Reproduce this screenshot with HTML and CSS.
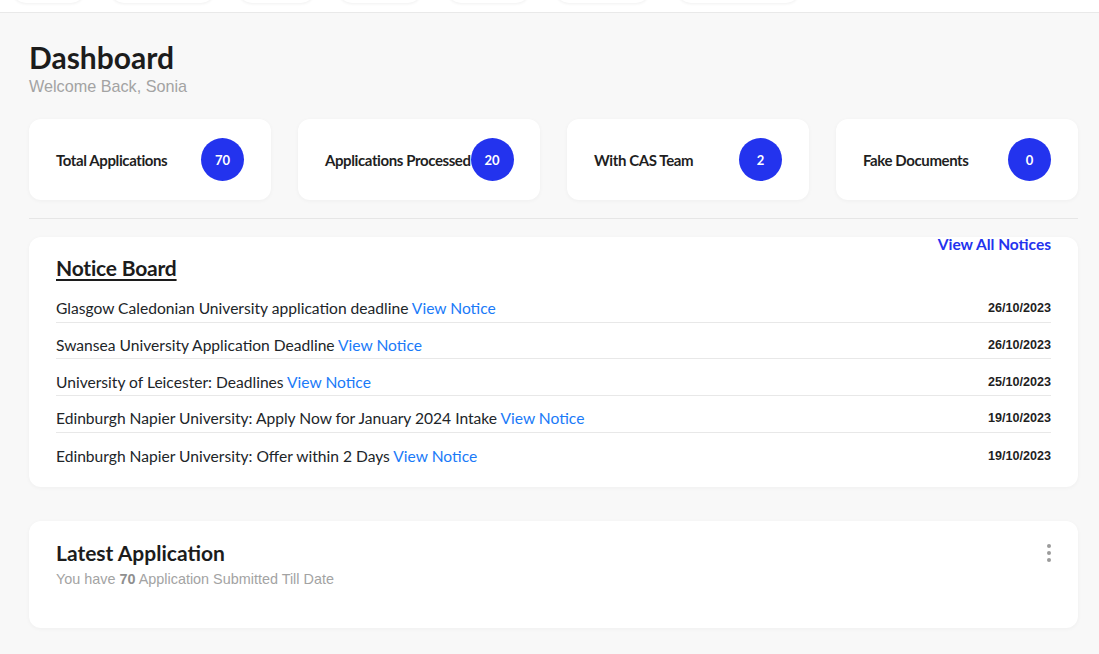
FILE: index.html
```html
<!DOCTYPE html>
<html lang="en">
<head>
<meta charset="utf-8">
<title>Dashboard</title>
<link rel="stylesheet" href="styles.css">
</head>
<body>
<header class="topbar">
  <span class="pill p1"></span>
  <span class="pill p2"></span>
  <span class="pill p3"></span>
  <span class="pill p4"></span>
  <span class="pill p5"></span>
  <span class="pill p6"></span>
  <span class="pill p7"></span>
</header>
<main class="main">
  <div class="page-head">
    <h1 class="page-title">Dashboard</h1>
    <p class="page-sub">Welcome Back, Sonia</p>
  </div>
  <section class="stats">
    <div class="stat"><span class="stat-label">Total Applications</span><span class="badge">70</span></div>
    <div class="stat"><span class="stat-label">Applications Processed</span><span class="badge">20</span></div>
    <div class="stat"><span class="stat-label">With CAS Team</span><span class="badge">2</span></div>
    <div class="stat"><span class="stat-label">Fake Documents</span><span class="badge">0</span></div>
  </section>
  <hr class="divider">
  <section class="card notices">
    <a class="view-all" href="#">View All Notices</a>
    <h2 class="card-title underline">Notice Board</h2>
    <ul class="notice-list">
      <li class="notice"><span class="notice-text">Glasgow Caledonian University application deadline <a href="#" class="notice-link">View Notice</a></span><span class="notice-date">26/10/2023</span></li>
      <li class="notice"><span class="notice-text">Swansea University Application Deadline <a href="#" class="notice-link">View Notice</a></span><span class="notice-date">26/10/2023</span></li>
      <li class="notice"><span class="notice-text">University of Leicester: Deadlines <a href="#" class="notice-link">View Notice</a></span><span class="notice-date">25/10/2023</span></li>
      <li class="notice"><span class="notice-text">Edinburgh Napier University: Apply Now for January 2024 Intake <a href="#" class="notice-link">View Notice</a></span><span class="notice-date">19/10/2023</span></li>
      <li class="notice"><span class="notice-text">Edinburgh Napier University: Offer within 2 Days <a href="#" class="notice-link">View Notice</a></span><span class="notice-date">19/10/2023</span></li>
    </ul>
  </section>
  <section class="card latest">
    <div class="latest-head">
      <div>
        <h2 class="card-title latest-title">Latest Application</h2>
        <p class="latest-sub">You have <b>70</b> Application Submitted Till Date</p>
      </div>
      <span class="kebab"><i></i><i></i><i></i></span>
    </div>
  </section>
</main>
</body>
</html>
```
FILE: styles.css
```css
* { box-sizing: border-box; }
html, body { margin: 0; padding: 0; }
body {
  background: #f8f8f8;
  font-family: Lato, "Open Sans", sans-serif;
  color: #212529;
  height: 654px;
  overflow: hidden;
}
.topbar {
  height: 13px;
  background: #fff;
  border-bottom: 1px solid #e9e9e9;
  display: flex;
  align-items: flex-end;
  overflow: hidden;
  padding-bottom: 9px;
}
.pill {
  height: 30px;
  flex: none;
  border-radius: 14px;
  background: #fff;
  box-shadow: 0 1px 3px rgba(0,0,0,0.06);
}
.p1 { margin-left: 12px; width: 73px; }
.p2 { margin-left: 25px; width: 105px; }
.p3 { margin-left: 23px; width: 77px; }
.p4 { margin-left: 23px; width: 84px; }
.p5 { margin-left: 25px; width: 83px; }
.p6 { margin-left: 25px; width: 95px; }
.p7 { margin-left: 27px; width: 123px; }

.main {
  padding: 27px 21px 0 29px;
}
.page-title {
  margin: 0;
  font-size: 30px;
  font-weight: 700;
  line-height: 34px;
  color: #1c1c1c;
}
.page-sub {
  margin: 2px 0 0;
  font-family: "Liberation Sans", Arial, sans-serif;
  font-size: 16.2px;
  line-height: 20px;
  color: #a3a3a3;
}
.stats {
  margin-top: 23px;
  display: grid;
  grid-template-columns: repeat(4, minmax(0, 1fr));
  gap: 27px;
}
.stat {
  height: 81px;
  background: #fff;
  border-radius: 12px;
  box-shadow: 0 1px 4px rgba(0,0,0,0.04);
  display: flex;
  align-items: center;
  justify-content: space-between;
  padding: 0 27px;
}
.stat-label {
  font-size: 15px;
  font-weight: 700;
  color: #1f1f1f;
  letter-spacing: -0.4px;
  white-space: nowrap;
}
.badge {
  width: 43px;
  height: 43px;
  flex: none;
  border-radius: 50%;
  background: #2333ee;
  color: #fff;
  font-size: 13px;
  font-weight: 700;
  display: flex;
  align-items: center;
  justify-content: center;
}
.divider {
  margin: 18px 0 18px;
  border: 0;
  border-top: 1px solid #e6e6e6;
}
.card {
  background: #fff;
  border-radius: 12px;
  box-shadow: 0 1px 4px rgba(0,0,0,0.04);
  padding: 0 27px;
  position: relative;
}
.notices {
  height: 250px;
  padding-top: 18px;
}
.view-all {
  position: absolute;
  top: -2px;
  right: 27px;
  color: #2333ee;
  font-weight: 700;
  font-size: 15.5px;
  text-decoration: none;
}
.card-title {
  margin: 0;
  font-size: 21px;
  font-weight: 700;
  line-height: 26px;
  color: #1c1c1c;
  letter-spacing: -0.2px;
}
.latest-title { letter-spacing: 0; }
.underline { text-decoration: underline; text-underline-offset: 3px; text-decoration-thickness: 2px; display: inline-block; }
.notice-list {
  list-style: none;
  margin: 5px 0 0;
  padding: 0;
}
.notice {
  display: flex;
  justify-content: space-between;
  align-items: center;
  height: 36.7px;
  border-bottom: 1px solid #e8e8e8;
  padding-top: 9px;
}
.notice:last-child { border-bottom: 0; }
.notice-text {
  font-size: 15.6px;
  color: #212529;
}
.notice-link {
  color: #1a7af8;
  text-decoration: none;
}
.notice-date {
  font-family: "Liberation Sans", Arial, sans-serif;
  font-size: 12.6px;
  font-weight: 700;
  color: #1f1f1f;
}
.latest {
  margin-top: 34px;
  height: 107px;
  padding-top: 19px;
}
.latest-head {
  display: flex;
  justify-content: space-between;
  align-items: flex-start;
}
.latest-sub {
  margin: 5px 0 0;
  font-family: "Liberation Sans", Arial, sans-serif;
  font-size: 14.4px;
  color: #a3a3a3;
}
.latest-sub b { color: #8f8f8f; }
.kebab {
  display: flex;
  flex-direction: column;
  gap: 3px;
  margin-top: 4px;
}
.kebab i {
  width: 4px;
  height: 4px;
  border-radius: 50%;
  background: #9b9b9b;
}
```
